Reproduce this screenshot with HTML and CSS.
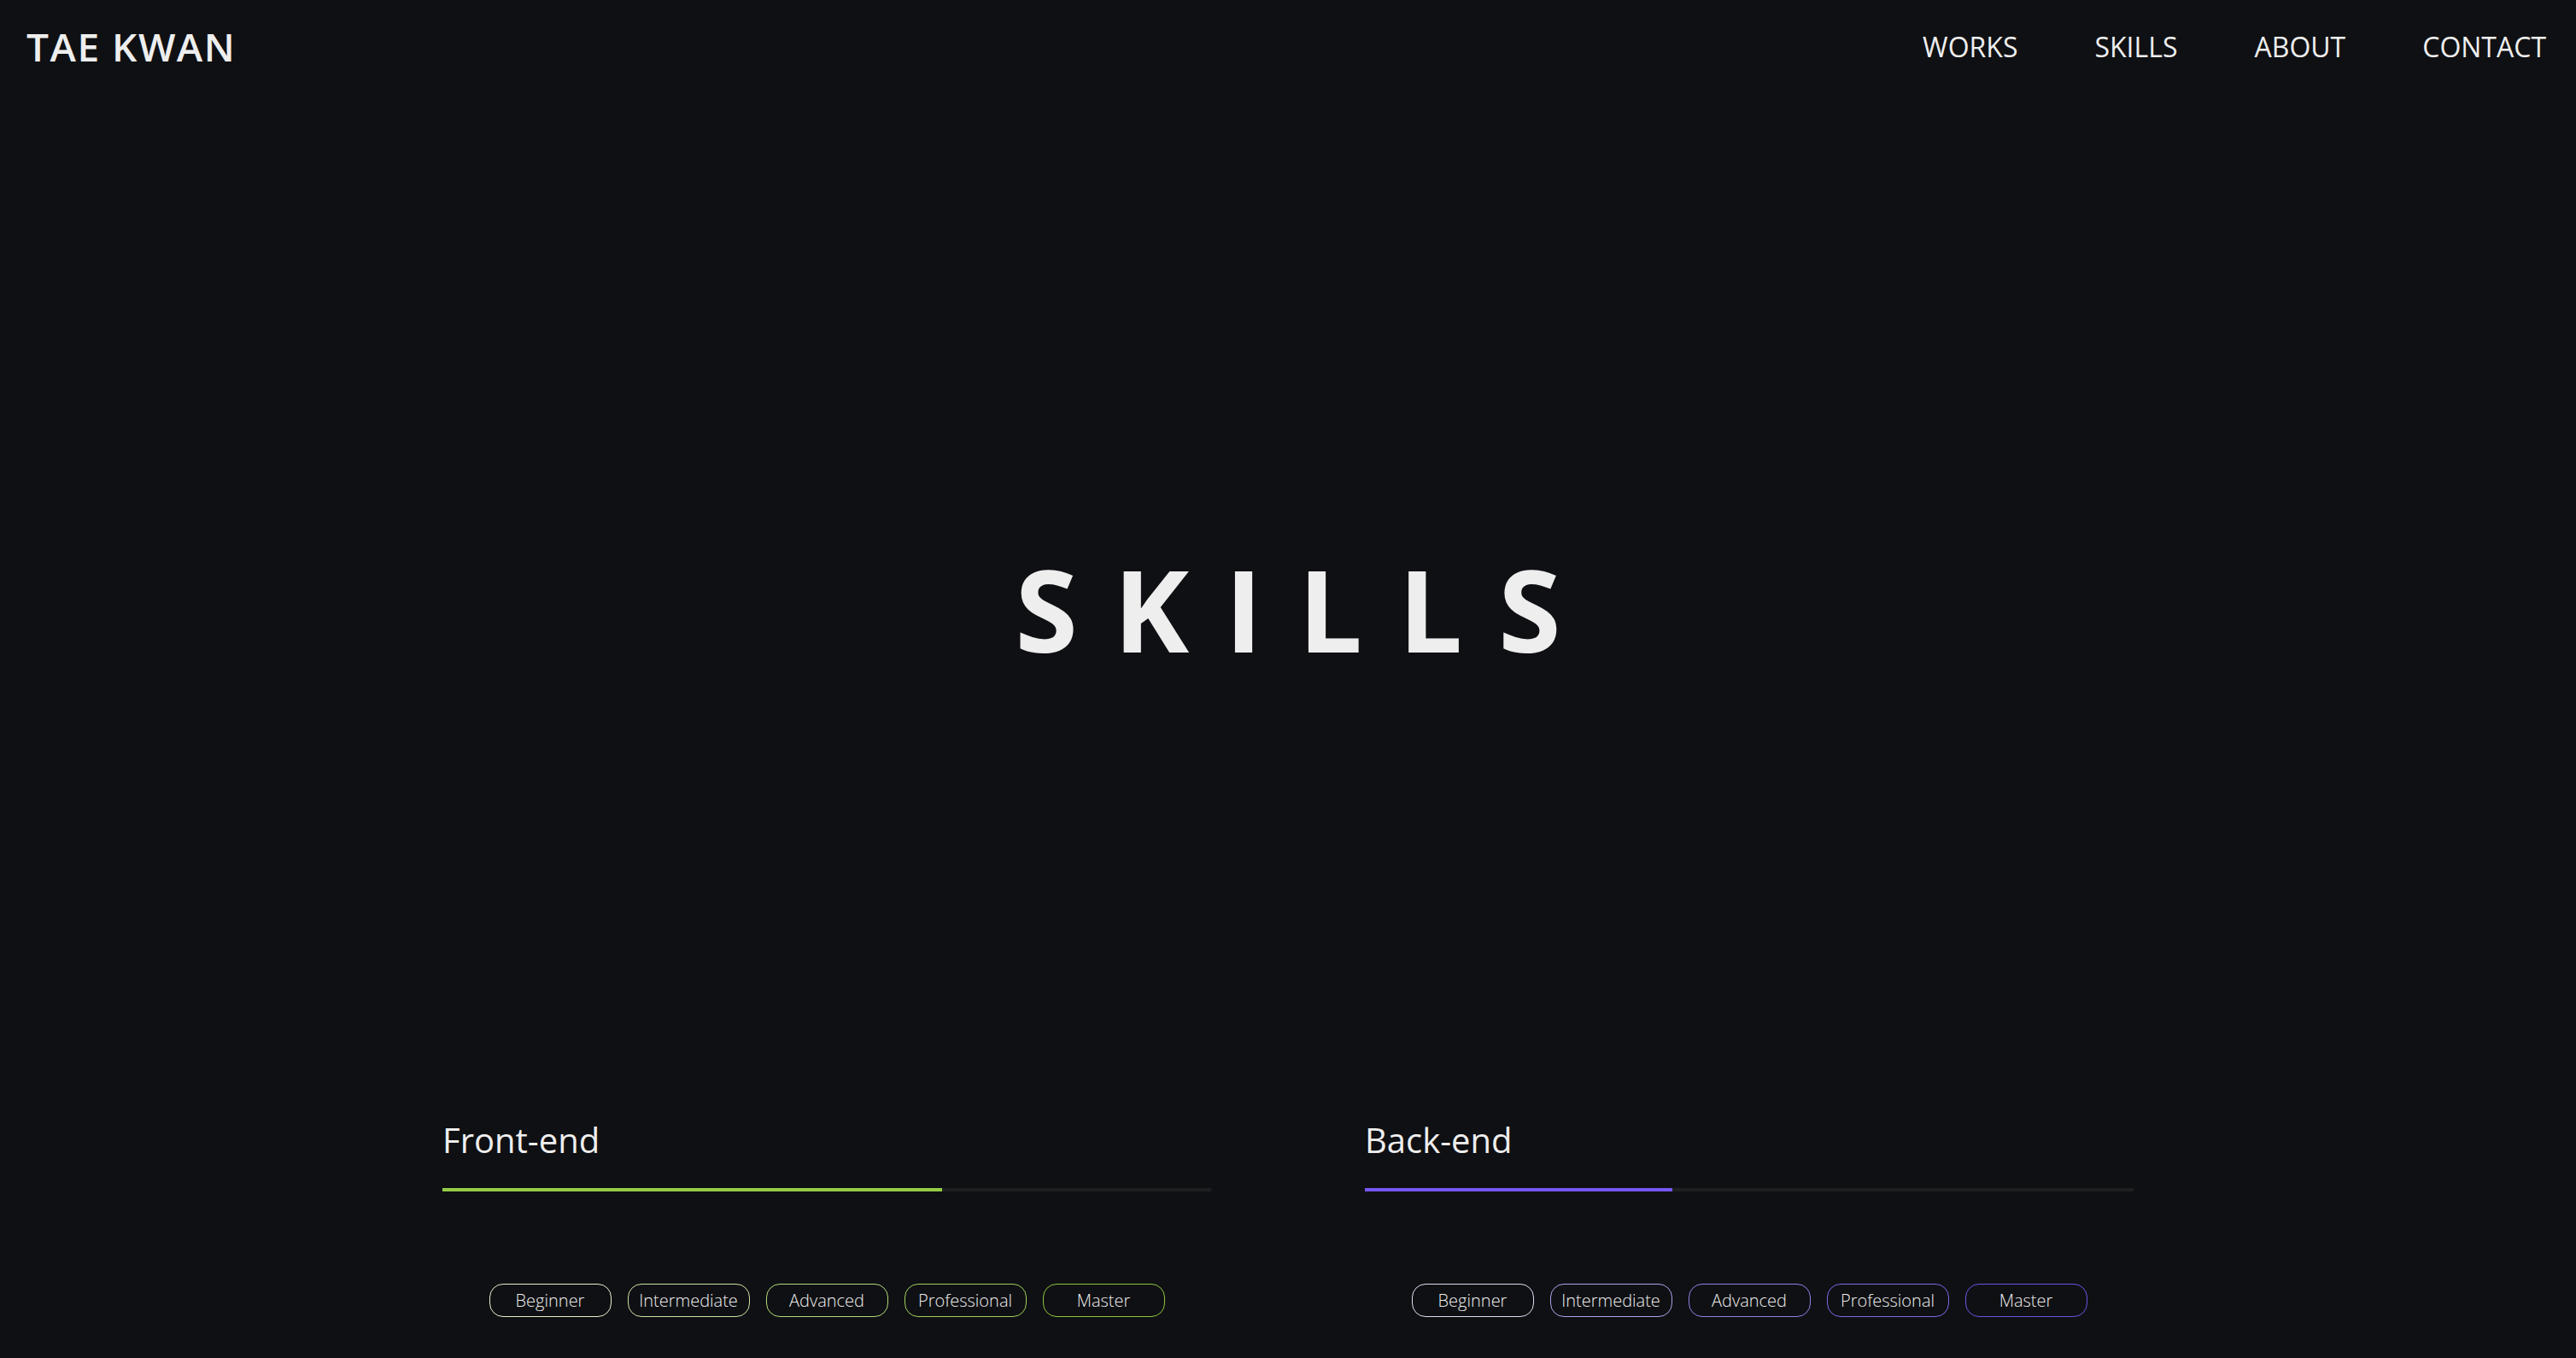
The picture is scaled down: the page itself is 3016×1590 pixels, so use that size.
FILE: index.html
```html
<!DOCTYPE html>
<html lang="en">
<head>
<meta charset="utf-8">
<title>Tae Kwan — Skills</title>
<link rel="stylesheet" href="styles.css">
</head>
<body>
<header class="header">
  <div class="logo">TAE KWAN</div>
  <nav class="nav">
    <a class="nav-link" href="#">WORKS</a>
    <a class="nav-link" href="#">SKILLS</a>
    <a class="nav-link" href="#">ABOUT</a>
    <a class="nav-link" href="#">CONTACT</a>
  </nav>
</header>
<section class="hero">
  <h1 class="hero-title">SKILLS</h1>
</section>
<section class="skills">
  <div class="skill-col front">
    <h2 class="skill-title">Front-end</h2>
    <div class="bar"><div class="bar-fill" style="width:65%"></div></div>
    <div class="levels">
      <span class="pill l1">Beginner</span>
      <span class="pill l2">Intermediate</span>
      <span class="pill l3">Advanced</span>
      <span class="pill l4">Professional</span>
      <span class="pill l5">Master</span>
    </div>
  </div>
  <div class="skill-col back">
    <h2 class="skill-title">Back-end</h2>
    <div class="bar"><div class="bar-fill" style="width:40%"></div></div>
    <div class="levels">
      <span class="pill l1">Beginner</span>
      <span class="pill l2">Intermediate</span>
      <span class="pill l3">Advanced</span>
      <span class="pill l4">Professional</span>
      <span class="pill l5">Master</span>
    </div>
  </div>
</section>
</body>
</html>
```

FILE: styles.css
```css
* { box-sizing: border-box; }
html, body {
  margin: 0;
  padding: 0;
  background: #0f1013;
  color: #eeeeee;
  font-family: "Open Sans", "Noto Sans", sans-serif;
}
.header {
  display: flex;
  justify-content: space-between;
  align-items: center;
  height: 108px;
  padding: 0 35px 0 31px;
}
.logo {
  font-size: 46px;
  font-weight: 600;
  letter-spacing: 1.5px;
}
.nav {
  display: flex;
  gap: 90px;
}
.nav-link {
  color: #eeeeee;
  text-decoration: none;
  font-size: 32px;
  font-weight: 500;
}
.hero {
  height: 1208px;
  display: flex;
  align-items: center;
  justify-content: center;
}
.hero-title {
  margin: 0;
  font-size: 133px;
  font-weight: 700;
  letter-spacing: 42px;
  margin-right: -42px;
}
.skills {
  display: grid;
  grid-template-columns: 900px 900px;
  column-gap: 180px;
  justify-content: center;
}
.skill-col { display: flex; flex-direction: column; }
.skill-title {
  margin: 0;
  font-size: 40px;
  font-weight: 500;
  line-height: 38px;
}
.bar {
  margin-top: 37px;
  height: 4px;
  background: #1e1f21;
}
.bar-fill { height: 100%; }
.front .bar-fill { background: #93cd48; }
.back .bar-fill { background: #7757f2; }
.levels {
  display: flex;
  justify-content: center;
  gap: 19px;
  margin-top: 108px;
}
.pill {
  width: 143px;
  height: 39px;
  border: 1.5px solid #ddd;
  border-radius: 16px;
  display: flex;
  align-items: center;
  justify-content: center;
  font-size: 20px;
  font-weight: 300;
}
.front .l1 { border-color: #e2f0cf; }
.front .l2 { border-color: #c9e4a2; }
.front .l3 { border-color: #b2da7a; }
.front .l4 { border-color: #9ed15a; }
.front .l5 { border-color: #8cc63f; }
.back .l1 { border-color: #e0ddf3; }
.back .l2 { border-color: #aea2e9; }
.back .l3 { border-color: #937fea; }
.back .l4 { border-color: #7f66ea; }
.back .l5 { border-color: #6e52e6; }
```
